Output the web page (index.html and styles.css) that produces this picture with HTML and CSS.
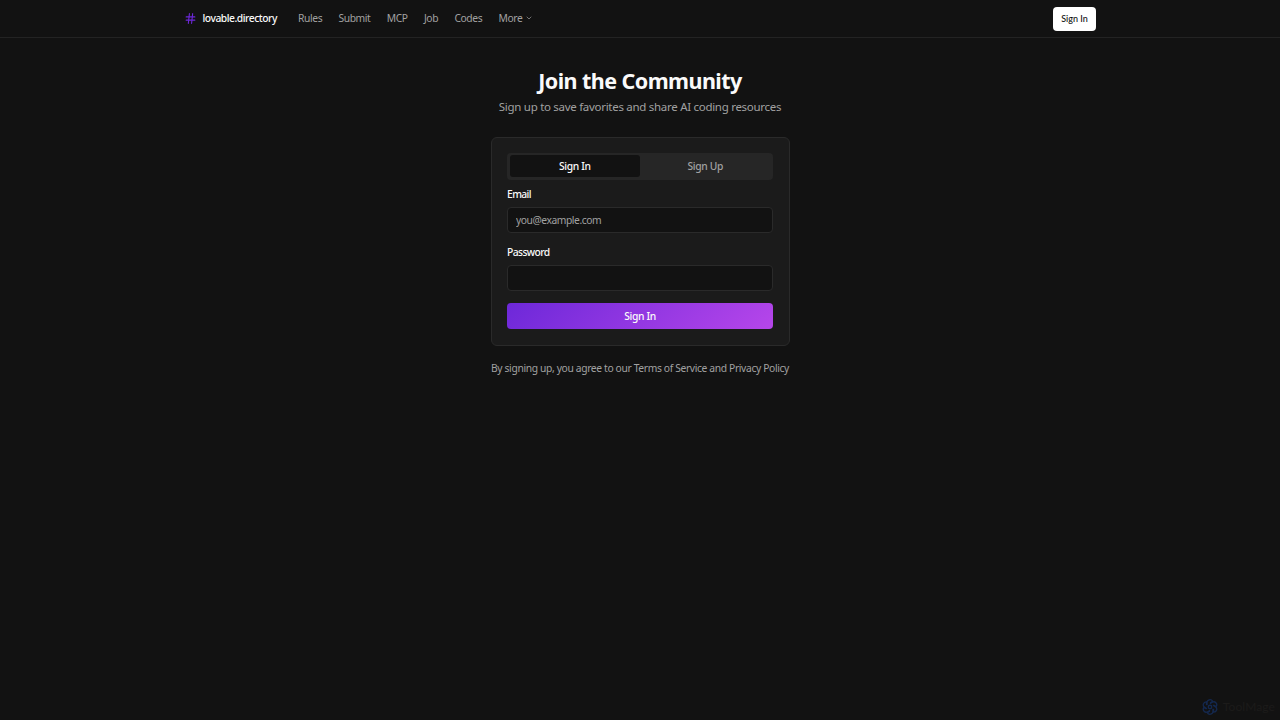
FILE: index.html
```html
<!DOCTYPE html>
<html lang="en">
<head>
    <meta charset="UTF-8">
    <title>Join the Community</title>
    <link rel="stylesheet" href="styles.css">
</head>
<body>

    <header class="header">
        <div class="header-inner">
            <a class="brand" href="#">
                <svg class="brand-icon" viewBox="0 0 24 24" fill="none" stroke="currentColor" stroke-width="2" stroke-linecap="round" stroke-linejoin="round">
                    <line x1="4" x2="20" y1="9" y2="9"/>
                    <line x1="4" x2="20" y1="15" y2="15"/>
                    <line x1="10" x2="8" y1="3" y2="21"/>
                    <line x1="16" x2="14" y1="3" y2="21"/>
                </svg>
                <span>lovable.directory</span>
            </a>
            <nav class="nav">
                <a href="#">Rules</a>
                <a href="#">Submit</a>
                <a href="#">MCP</a>
                <a href="#">Job</a>
                <a href="#">Codes</a>
                <a class="more" href="#">More
                    <svg class="chevron" viewBox="0 0 24 24" fill="none" stroke="currentColor" stroke-width="2" stroke-linecap="round" stroke-linejoin="round"><path d="m6 9 6 6 6-6"/></svg>
                </a>
            </nav>
            <button class="header-btn">Sign In</button>
        </div>
    </header>

    <main class="main">
        <h1>Join the Community</h1>
        <p class="subtitle">Sign up to save favorites and share AI coding resources</p>

        <div class="card">
            <div class="tabs">
                <button class="tab active">Sign In</button>
                <button class="tab">Sign Up</button>
            </div>
            <form>
                <label for="email">Email</label>
                <input type="email" id="email" placeholder="you@example.com">

                <label for="password">Password</label>
                <input type="password" id="password">

                <button class="submit" type="button">Sign In</button>
            </form>
        </div>

        <p class="terms">By signing up, you agree to our Terms of Service and Privacy Policy</p>
    </main>

    <div class="watermark">
        <svg viewBox="0 0 24 24" fill="none" stroke="currentColor" stroke-width="2">
            <circle cx="12" cy="12" r="2.6"/>
            <path id="petal" d="M7.5 9.5V5.5a4.5 4.5 0 0 1 8.5-2l-4 2.5"/>
            <use href="#petal" transform="rotate(60 12 12)"/>
            <use href="#petal" transform="rotate(120 12 12)"/>
            <use href="#petal" transform="rotate(180 12 12)"/>
            <use href="#petal" transform="rotate(240 12 12)"/>
            <use href="#petal" transform="rotate(300 12 12)"/>
        </svg>
        <span>ToolMage</span>
    </div>

</body>
</html>
```

FILE: styles.css
```css
* {
    box-sizing: border-box;
}

body {
    margin: 0;
    height: 720px;
    overflow: hidden;
    background-color: #121212;
    color: #fafafa;
    font-family: "Noto Sans", "Open Sans", sans-serif;
    font-size: 10.3px;
    line-height: 14px;
    letter-spacing: -0.36px;
}

a {
    color: inherit;
    text-decoration: none;
}

button {
    border: none;
    padding: 0;
    font-family: inherit;
    letter-spacing: inherit;
}

.header {
    height: 38px;
    border-bottom: 1px solid #232323;
}

.header-inner {
    display: flex;
    align-items: center;
    width: 912px;
    height: 36px;
    margin: 0 auto;
}

.brand {
    display: flex;
    align-items: center;
    gap: 5.5px;
    width: 114px;
    font-weight: 500;
    letter-spacing: -0.47px;
    white-space: nowrap;
}

.brand-icon {
    width: 13px;
    height: 13px;
    color: #6d28d9;
}

.nav {
    display: flex;
    gap: 16.3px;
    flex: 1;
    color: #a1a1a1;
    letter-spacing: -0.4px;
}

.more {
    display: flex;
    align-items: center;
    gap: 3px;
}

.chevron {
    width: 8px;
    height: 8px;
}

.header-btn {
    width: 43px;
    height: 24px;
    margin-top: 1px;
    border-radius: 4px;
    background-color: #fff;
    color: #121212;
    font-family: Lato, sans-serif;
    font-size: 9px;
    font-weight: 500;
    letter-spacing: 0;
}

.main {
    width: 299px;
    margin: 0 auto;
    padding-top: 28px;
}

h1 {
    margin: 0;
    font-size: 21.5px;
    line-height: 30px;
    font-weight: 700;
    letter-spacing: -0.55px;
    text-align: center;
    white-space: nowrap;
}

.subtitle {
    margin: 3px 0 22.5px;
    color: #a1a1a1;
    font-size: 11.5px;
    line-height: 15px;
    letter-spacing: -0.29px;
    text-align: center;
    white-space: nowrap;
}

.card {
    height: 209px;
    padding: 15px 15.5px;
    border: 1px solid #2a2a2a;
    border-radius: 6px;
    background-color: #1b1b1b;
}

.tabs {
    display: flex;
    height: 27px;
    padding: 2.5px;
    border-radius: 4px;
    background-color: #262626;
}

.tab {
    flex: 1;
    border-radius: 3px;
    background: none;
    color: #a1a1a1;
    font-size: 10.3px;
    font-weight: 500;
}

.tab.active {
    background-color: #121212;
    color: #fafafa;
}

label {
    display: block;
    margin: 7px 0 6px;
    font-weight: 500;
    letter-spacing: -0.6px;
}

input {
    display: block;
    width: 100%;
    height: 26.5px;
    padding: 0 8px;
    border: 1px solid #2a2a2a;
    border-radius: 4px;
    background-color: #121212;
    color: #fafafa;
    font-family: inherit;
    font-size: 10.3px;
    letter-spacing: -0.45px;
}

input::placeholder {
    color: #a1a1a1;
}

input + label {
    margin-top: 11.5px;
}

.submit {
    display: block;
    width: 100%;
    height: 26.5px;
    margin-top: 11.5px;
    border-radius: 4px;
    background: linear-gradient(135deg, #6d28d9, #b646ea);
    color: #fafafa;
    font-size: 10.3px;
    font-weight: 500;
}

.terms {
    margin: 15.5px 0 0;
    color: #a1a1a1;
    text-align: center;
    white-space: nowrap;
}

/* faint badge over the page corner */
.watermark {
    position: absolute;
    right: 5px;
    bottom: 5px;
    display: flex;
    align-items: center;
    gap: 5px;
    color: #1c1b1a;
    font-family: Lato, sans-serif;
    font-size: 12px;
    line-height: 16px;
    letter-spacing: 0.1px;
}

.watermark svg {
    width: 16px;
    height: 16px;
    color: #14284e;
}
```
